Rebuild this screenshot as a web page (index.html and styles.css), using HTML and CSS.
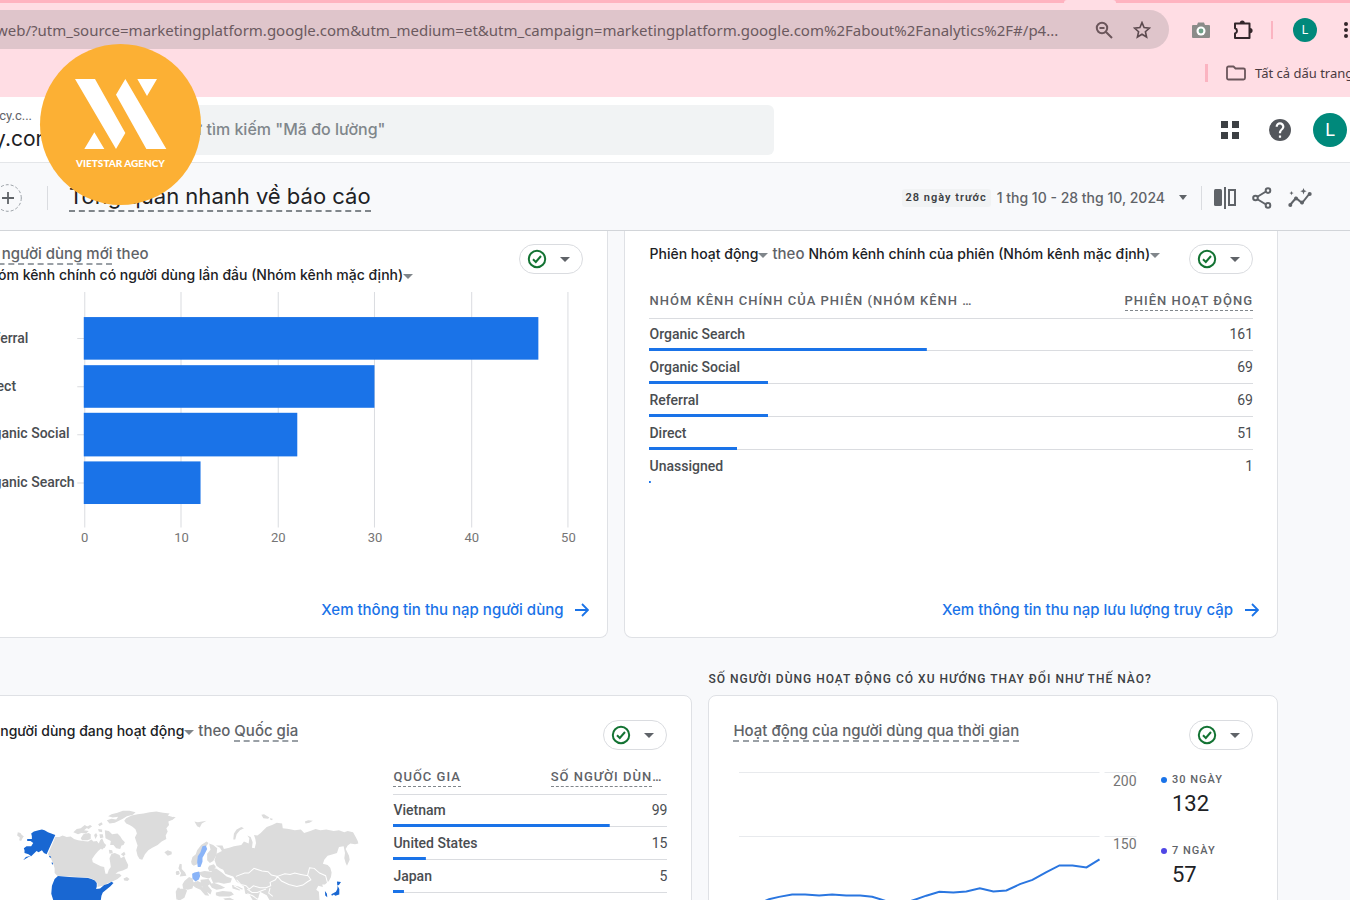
FILE: index.html
```html
<!DOCTYPE html>
<html lang="vi">
<head>
<meta charset="utf-8">
<title>Tổng quan nhanh về báo cáo</title>
<link rel="stylesheet" href="styles.css">
</head>
<body>
<div class="window">
  <div class="tabstrip"><span class="tab-active"></span></div>
  <div class="toolbar">
    <div class="omnibox">
      <input class="url" type="text" aria-label="URL" readonly value="web/?utm_source=marketingplatform.google.com&amp;utm_medium=et&amp;utm_campaign=marketingplatform.google.com%2Fabout%2Fanalytics%2F#/p4...">
      <button class="icon-btn" aria-label="Thu phóng"><svg width="18" height="18" viewBox="0 0 18 18" fill="none" stroke="#6b565b" stroke-width="2"><circle cx="7" cy="7" r="5.2"/><path d="M4.500 7h5M11 11l6 6"/></svg></button>
      <button class="icon-btn" aria-label="Dấu trang"><svg width="18" height="18" viewBox="0 0 18 18" fill="none" stroke="#5c4a4f" stroke-width="1.600"><path d="M9 1.600l2.100 5 5.400.5-4.100 3.600 1.200 5.300L9 13.200 4.400 16l1.200-5.300L1.500 7.100l5.400-.5z"/></svg></button>
    </div>
    <div class="extensions">
      <button class="icon-btn" aria-label="Chụp ảnh"><svg width="18" height="18" viewBox="0 0 18 18"><path d="M1 4h4l1-2.500h6L13 4h4a1 1 0 0 1 1 1v11a1 1 0 0 1-1 1H1a1 1 0 0 1-1-1V5a1 1 0 0 1 1-1z" fill="#8b8b89"/><circle cx="9" cy="10" r="4.500" fill="#fff"/><circle cx="9" cy="10" r="2.400" fill="#6fa088"/></svg></button>
      <button class="icon-btn" aria-label="Tiện ích"><svg width="20" height="20" viewBox="0 0 20 20"><path d="M2 3.500h14.500V18H2v-4.500a2.700 2.700 0 0 0 0-5.200z" fill="none" stroke="#33262a" stroke-width="2" stroke-linejoin="round"/><path d="M6.800 3a2.500 2.500 0 0 1 5 0zM17 8a2.600 2.600 0 0 1 0 5.200z" fill="#33262a"/></svg></button>
      <span class="bar-line"></span>
      <button class="avatar avatar-small" aria-label="Hồ sơ">L</button>
      <button class="icon-btn" aria-label="Trình đơn"><svg width="6" height="18" viewBox="0 0 6 18" fill="#33262a"><circle cx="3" cy="3" r="2"/><circle cx="3" cy="9" r="2"/><circle cx="3" cy="15" r="2"/></svg></button>
    </div>
  </div>
  <div class="bookmarks">
    <span class="bar-line bar-strong"></span>
    <button class="bookmark"><svg width="20" height="16" viewBox="0 0 20 16" fill="none" stroke="#6b565b" stroke-width="1.800" stroke-linejoin="round"><path d="M1 3a1.500 1.500 0 0 1 1.500-1.500H7.500l2 2h8A1.500 1.500 0 0 1 19 5v8a1.500 1.500 0 0 1-1.500 1.500h-15A1.500 1.500 0 0 1 1 13z"/></svg>Tất cả dấu trang</button>
  </div>

  <header class="app-bar">
    <div class="property"><span class="account">vietstaragency.c...</span><span class="site">vietstaragency.com</span></div>
    <input class="search" type="search" aria-label="Tìm kiếm" placeholder="Thử tìm kiếm &quot;Mã đo lường&quot;">
    <div class="app-actions">
      <button class="icon-btn" aria-label="Sản phẩm"><svg width="20" height="20" viewBox="0 0 20 20" fill="#3c4043"><path d="M1 1h7v7H1zM12 1h7v7h-7zM1 12h7v7H1zM12 12h7v7h-7z"/></svg></button>
      <button class="icon-btn" aria-label="Trợ giúp"><svg width="22" height="22" viewBox="2 2 20 20"><path fill="#54575c" d="M12 2a10 10 0 1 0 0 20 10 10 0 0 0 0-20zm1 17h-2v-2h2zm2.070-7.750l-.9.920C13.450 12.900 13 13.500 13 15h-2v-.5c0-1.100.450-2.100 1.170-2.830l1.240-1.260A2 2 0 1 0 10 9H8a4 4 0 1 1 8 0c0 .880-.360 1.680-.930 2.250z"/></svg></button>
      <button class="avatar" aria-label="Tài khoản">L</button>
    </div>
  </header>

  <div class="report-bar">
    <button class="add" aria-label="Thêm so sánh"><svg width="28" height="28" viewBox="0 0 28 28" fill="none"><circle cx="14" cy="14" r="13.300" stroke="#9aa0a6" stroke-dasharray="3 2"/><path d="M14 8v12M8 14h12" stroke="#5f6368" stroke-width="1.800"/></svg></button>
    <h1 class="report-title"><span>Tổng quan nhanh về báo cáo</span></h1>
    <div class="report-tools">
      <span class="chip">28 ngày trước</span>
      <button class="range">1 thg 10 - 28 thg 10, 2024<span class="caret"></span></button>
      <span class="tool-line"></span>
      <button class="icon-btn" aria-label="So sánh"><svg width="22" height="22" viewBox="0 0 22 22"><rect x="0" y="2" width="8" height="17" rx="1.500" fill="#5f6368"/><path d="M11 0v22" stroke="#5f6368" stroke-width="2"/><rect x="15" y="3" width="6" height="15" fill="none" stroke="#5f6368" stroke-width="2"/></svg></button>
      <button class="icon-btn" aria-label="Chia sẻ"><svg width="20" height="22" viewBox="0 0 20 22" fill="none" stroke="#5f6368" stroke-width="2"><path d="M5 10l9-5.500M5 12l9 5.500"/><circle cx="3.500" cy="11" r="2.300"/><circle cx="16" cy="3.600" r="2.300"/><circle cx="16" cy="18.400" r="2.300"/></svg></button>
      <button class="icon-btn" aria-label="Thông tin chi tiết"><svg width="24" height="20" viewBox="0 0 24 20"><path d="M2 17l6-7 6 5 8-10" fill="none" stroke="#5f6368" stroke-width="2"/><g fill="#5f6368"><circle cx="2.300" cy="17" r="2"/><circle cx="8" cy="10.500" r="2"/><circle cx="14" cy="14.500" r="2"/><circle cx="21.700" cy="6" r="2"/><path d="M15.500 0l.9 2.300 2.300.9-2.300.9-.9 2.300-.9-2.300-2.300-.9 2.300-.9zM3.500 3l.6 1.500 1.500.6-1.500.6-.6 1.500-.6-1.500-1.500-.6 1.500-.6z"/></g></svg></button>
    </div>
  </div>

  <main class="reports">
    <div class="row row-top">
      <section class="card card-top">
        <div class="card-head">
          <h2 class="card-title"><span class="line"><span class="dashed">Số người dùng mới</span> theo</span><span class="line strong">Nhóm kênh chính có người dùng lần đầu (Nhóm kênh mặc định)<span class="caret caret-tight"></span></span></h2>
          <button class="status" aria-label="Chất lượng dữ liệu"><svg width="20" height="20" viewBox="0 0 20 20" fill="none" stroke="#137333" stroke-width="2"><circle cx="10" cy="10" r="8.200"/><path d="M6 10.300l2.800 2.700L14 7"/></svg><span class="caret"></span></button>
        </div>
        <svg class="bar-chart" viewBox="-20 290 603 260">
          <path d="M85.500 292v235M181.500 292v235M278.500 292v235M374.500 292v235M471.500 292v235M567.500 292v235" stroke="#dadce0"/>
          <path d="M78 338.500h7M78 386.500h7M78 434.500h7M78 482.500h7" stroke="#dadce0"/>
          <g fill="#1a73e8"><rect x="84.500" y="317" width="453.500" height="42.500"/><rect x="84.500" y="365" width="290" height="42.500"/><rect x="84.500" y="412.500" width="213" height="43.500"/><rect x="84.500" y="461" width="116.500" height="42.500"/></g>
          <g class="bar-names"><text x="-20" y="343">Referral</text><text x="-20" y="391">Direct</text><text x="-20" y="438">Organic Social</text><text x="-20" y="487">Organic Search</text></g>
          <g class="axis"><text x="85.500" y="541">0</text><text x="182" y="541">10</text><text x="278.500" y="541">20</text><text x="375" y="541">30</text><text x="471.500" y="541">40</text><text x="568" y="541">50</text></g>
        </svg>
        <a class="more" href="#acquisition">Xem thông tin thu nạp người dùng<svg width="14" height="14" viewBox="0 0 14 14" fill="none" stroke="#1a73e8" stroke-width="1.800"><path d="M0 7h12.500M7 1l6 6-6 6"/></svg></a>
      </section>

      <section class="card card-top">
        <div class="card-head">
          <h2 class="card-title"><span class="line"><span class="strong">Phiên hoạt động<span class="caret caret-tight"></span></span> theo <span class="strong">Nhóm kênh chính của phiên (Nhóm kênh mặc định)<span class="caret caret-tight"></span></span></span></h2>
          <button class="status" aria-label="Chất lượng dữ liệu"><svg width="20" height="20" viewBox="0 0 20 20" fill="none" stroke="#137333" stroke-width="2"><circle cx="10" cy="10" r="8.200"/><path d="M6 10.300l2.800 2.700L14 7"/></svg><span class="caret"></span></button>
        </div>
        <table class="data">
          <thead><tr><th>NHÓM KÊNH CHÍNH CỦA PHIÊN (NHÓM KÊNH …</th><th class="num"><span class="dashed-thin">PHIÊN HOẠT ĐỘNG</span></th></tr></thead>
          <tbody>
            <tr style="--share:46%"><td>Organic Search</td><td class="num">161</td></tr>
            <tr style="--share:19.700%"><td>Organic Social</td><td class="num">69</td></tr>
            <tr style="--share:19.700%"><td>Referral</td><td class="num">69</td></tr>
            <tr style="--share:14.600%"><td>Direct</td><td class="num">51</td></tr>
            <tr style="--share:0.300%"><td>Unassigned</td><td class="num">1</td></tr>
          </tbody>
        </table>
        <a class="more" href="#traffic">Xem thông tin thu nạp lưu lượng truy cập<svg width="14" height="14" viewBox="0 0 14 14" fill="none" stroke="#1a73e8" stroke-width="1.800"><path d="M0 7h12.500M7 1l6 6-6 6"/></svg></a>
      </section>
    </div>

    <div class="row row-bottom">
      <h3 class="section-title">SỐ NGƯỜI DÙNG HOẠT ĐỘNG CÓ XU HƯỚNG THAY ĐỔI NHƯ THẾ NÀO?</h3>
      <section class="card card-low">
        <div class="card-head">
          <h2 class="card-title"><span class="line"><span class="strong">Số người dùng đang hoạt động<span class="caret caret-tight"></span></span> theo <span class="dashed">Quốc gia</span></span></h2>
          <button class="status" aria-label="Chất lượng dữ liệu"><svg width="20" height="20" viewBox="0 0 20 20" fill="none" stroke="#137333" stroke-width="2"><circle cx="10" cy="10" r="8.200"/><path d="M6 10.300l2.800 2.700L14 7"/></svg><span class="caret"></span></button>
        </div>
        <div class="geo">
          <svg class="map" viewBox="-60 231 1161 480">
            <g transform="translate(30 345)">
              <g fill="#dcdcdc">
                <path d="M138 98L150 98 160 94 172 98 184 97 194 104 206 108 222 110 236 112 246 106 252 112 262 110 268 118 272 108 278 102 284 116 290 122 286 130 276 132 266 140 256 152 248 164 250 174 262 180 274 186 284 188 286 198 288 208 294 208 298 196 304 188 302 174 300 162 306 148 316 146 330 152 334 162 344 156 350 170 356 182 354 192 340 198 326 202 318 208 330 208 336 214 324 224 312 230 296 236 280 244 264 248 264 236 254 226 240 220 144 214 136 206 136 192 132 178 124 160 116 150z"/>
                <path d="M350 42L366 34 384 30 402 28 420 24 440 22 460 26 480 28 474 34 494 40 490 46 476 52 478 62 470 72 474 82 468 94 470 104 456 112 444 122 428 130 416 138 406 150 398 166 390 164 384 154 380 138 384 124 380 112 376 100 382 88 378 76 370 68 360 62 350 58 344 50z"/>
                <path d="M292 48L306 44 320 46 326 38 310 40 296 36 306 30 324 26 340 20 360 20 378 24 370 32 352 36 340 44 328 50 316 56 300 58zM266 60l10-6 4 6-10 6zM192 84l10-10 12-2 12-10 10 6-12 10 14 2-8 8-14-2-10 4zM214 102l8-12 16-4 6 4 0 14-10 4-16 0zM228 70l14-8 6 4-10 8zM254 92l6-6 4 8-6 10zM266 74l12 2 0 8-10-2zM270 90l10 0 2 10-10 2zM286 78l12 2 10 10 16-2 8 8 6 10 8 8-4 8-6 2-4 10-12-2-8-10-10 0 2-12-16-8zM268 126l10-6 8 8-8 8zM298 136l10 2 2 8-10 2zM334 150l10-8 4 8-6 6zM342 222l10-4 8 6-6 6-10-2zM26 84l8 2 4 6 6 4-4 6-4 8-6-2 2-8-8-6zM464 144l10-6 12 4 0 8-12 4zM498 204l8 0 2 6-8 2zM498 262l6-12 6 0 0 35h-10z"/>
              </g>
              <path fill="#1967d2" d="M68 96L66 88 74 82 88 78 98 76 106 78 116 84 138 92 112 150 104 146 98 138 88 144 82 140 66 156 58 150 46 146 46 138 44 132 52 126 66 126 72 116 64 110 54 110 54 104 68 104zM66 154l-8 4-16 10 8-10zM119 154l5 2 2 5-5-2zM128 173l3 4 0 5-4-5zM146 215L180 218 236 221 246 224 256 228 262 236 262 246 260 254 272 252 284 242 296 238 306 232 312 236 302 246 290 256 280 264 276 274 272 300H136L126 268 128 244 136 224z"/>
            </g>
            <g transform="translate(510 345)">
              <g fill="#dcdcdc">
                <path d="M140 148L156 140 150 130 138 124 158 124 162 134 178 130 192 126 214 122 222 112 236 118 238 102 232 94 242 98 248 114 246 130 254 132 258 116 256 104 252 92 262 94 272 86 280 78 290 68 306 62 320 56 336 58 338 72 356 74 374 78 392 76 402 86 420 80 436 74 450 78 468 76 490 80 506 78 522 84 532 80 548 84 556 98 562 110 564 118 554 120 540 118 532 124 526 134 536 154 538 166 530 184 526 176 522 162 524 146 520 126 506 128 500 146 488 150 472 154 462 166 458 178 472 182 480 190 484 204 482 218 476 230 464 240 456 240 458 248 444 244 438 256 446 262 448 290 300 290 290 272 270 262 262 290 250 290 238 270 226 268 222 246 200 232 190 216 166 208 160 196 150 192 140 184 134 168z"/>
                <path d="M190 106l2-18 8-12 14-8 8 4-12 6-10 12-4 16zM74 52l10 2 26-4-14 8-6 12-8-4zM274 32l8-2 16 10-4 4-14-2zM300 42l8 2-2 4-6-2zM404 52l10-4 14 2-10 6-12 2zM0 44l12-6 6 2-14 8zM64 172l4-14 10-8 4-12 12-16 16-10 6 4-8 12-14 16-8 18-4 18-10 4-6-4zM112 168l0-20 10-12-4-18 12 4 12 10-2 20-10 18-10 6zM118 184l14-4 6 8-8 12-12 0-4-8zM84 204l20-4 20 2 4 14-12 6-18-4zM30 178l6 2 0 14 10 10 4 10-20 2 4-10-8-14zM20 200l8 0 2 8-8 4-4-6zM44 230l14-12 10 4 4 14-4 16-14 4-14-4-2-12zM22 254l22-2 8 6-8 22-18 10-6-14zM70 234l14-4 12 6 0 10 14 14 8 14-12-2-14-16-14-6-8-6zM92 226l24-2 8 12-10 8 12 14-4 12-16-12-12-16zM124 202l14-10 18 12 14 12 16 6-4 12-20 4-16-4-16 2-6-14zM118 238l16-2 16 6 16 8-12 4-14 2-14-6zM138 264l20-4 26 2 8 8-14 6-30 0-10-4zM186 242l20 4 14 8-12 4-20-6zM160 282l20-2 20 10h-30z"/>
              </g>
              <path fill="none" stroke="#fff" stroke-width="3" d="M198 216L224 206 236 206 252 192 276 200 294 202 304 212 322 216 316 226 300 234 302 244 288 250 270 250 250 244 238 254 228 244 212 240 200 226M322 216L344 208 360 210 374 206 392 210 412 214 418 190 432 192 448 206 466 214 472 236M322 216L334 230 356 240 380 246 398 242 412 232 422 226 414 214M300 250l-4 16 12 10M232 254l14 10 16 0 14-6 12-4M232 268l16 6 14 10 20-8M192 244l22 12 12 14"/>
              <path fill="#1967d2" d="M500 231l12 2-6 9-5 1zM502 244l5 10 0 16-12 4-4-4-6 4-2-5 14-7 4-8zM464 260l6 8 1 10-6-5z"/>
              <path fill="#8ab4f8" d="M98 126l10-2 4 10-8 16-6 10 0 12-6 16-8 0-2-14 2-18 8-12zM74 204l14-3 3 14-4 10-10 6-9-9-1-14z"/>
            </g>
          </svg>
          <table class="data data-geo">
            <thead><tr><th><span class="dashed-thin">QUỐC GIA</span></th><th class="num cut"><span class="dashed-thin">SỐ NGƯỜI DÙN</span>…</th></tr></thead>
            <tbody>
              <tr style="--share:79%"><td>Vietnam</td><td class="num">99</td></tr>
              <tr style="--share:12%"><td>United States</td><td class="num">15</td></tr>
              <tr style="--share:4%"><td>Japan</td><td class="num">5</td></tr>
            </tbody>
          </table>
        </div>
      </section>

      <section class="card card-low">
        <div class="card-head">
          <h2 class="card-title"><span class="line"><span class="dashed">Hoạt động của người dùng qua thời gian</span></span></h2>
          <button class="status" aria-label="Chất lượng dữ liệu"><svg width="20" height="20" viewBox="0 0 20 20" fill="none" stroke="#137333" stroke-width="2"><circle cx="10" cy="10" r="8.200"/><path d="M6 10.300l2.800 2.700L14 7"/></svg><span class="caret"></span></button>
        </div>
        <div class="trend">
          <svg class="line-chart" viewBox="733 767 403 160">
            <path d="M739 773.500h360M1104 773.500h32M739 837.500h360M1104 837.500h32" stroke="#e8eaed"/>
            <path d="M760 904l9-4 10-2.300 13-2.400h13l14 1 13-1 14 1h14l12 1.200 8 2.500 18 6 18-6 10-3.500 13-4 14 .8 13-1 13.500-3.300 13.500 3.300 13-1 13.500-6.300 12.500-4.300 13.500-7.400 13.500-7h13l14 2 13-8" fill="none" stroke="#2a76e0" stroke-width="2"/>
            <g class="scale"><text x="1136" y="787">200</text><text x="1136" y="850">150</text></g>
          </svg>
          <dl class="legend">
            <dt class="d30">30 NGÀY</dt><dd>132</dd>
            <dt class="d7">7 NGÀY</dt><dd>57</dd>
          </dl>
        </div>
      </section>
    </div>
  </main>

  <div class="brand">
    <svg width="92" height="70" viewBox="223 238 276 210" fill="#fff"><path d="M223 238h60l91 162-28 48zM374 238l123 210h-60L346 285zM410 238h59l-30 51zM281 398l30 50h-60z"/></svg>
    <span class="brand-name">VIETSTAR AGENCY</span>
  </div>
</div>
</body>
</html>
```
FILE: styles.css
```css
* { box-sizing: border-box; }
body { margin: 0; height: 100vh; overflow: hidden; background: #f8f9fb; font-family: Roboto, sans-serif; color: #3c4043; }
button { border: 0; padding: 0; background: none; font: inherit; color: inherit; cursor: pointer; white-space: nowrap; }
svg { display: block; flex: none; }
.icon-btn { display: flex; flex: none; }

.window { position: relative; display: flex; flex-direction: column; height: 100vh; margin-left: -46px; }

.tabstrip { height: 3px; background: #ffb3c0; padding-right: 234px; display: flex; justify-content: flex-end; }
.tab-active { width: 52px; background: #ffdde4; border-radius: 6px 6px 0 0; }
.toolbar { display: flex; align-items: center; padding-top: 7px; background: #ffdde4; }
.omnibox { flex: 1; display: flex; align-items: center; gap: 20px; height: 39px; padding: 0 18px 0 42px; background: #dfc5cb; border-radius: 20px; }
.url { flex: 1; min-width: 0; padding: 0; border: 0; outline: 0; background: none; font: 15px/24px "Noto Sans", sans-serif; color: #6b5a5f; }
.extensions { display: flex; align-items: center; gap: 18px; width: 181px; padding-left: 23px; }
.extensions .icon-btn:nth-child(2) { margin-left: 5px; }
.bar-line { flex: none; width: 2px; height: 18px; background: #fbb4c1; }
.avatar { flex: none; width: 34px; height: 34px; border-radius: 50%; background: #00897b; color: #fff; font: 18px/34px Roboto, sans-serif; text-align: center; }
.avatar-small { width: 24px; height: 24px; font-size: 12px; line-height: 24px; }
.extensions .avatar { margin: 0 8px 0 2px; }
.bookmarks { display: flex; justify-content: flex-end; align-items: center; gap: 18px; height: 48px; background: #ffdde4; }
.bar-strong { width: 3px; }
.bookmark { display: flex; align-items: center; gap: 9px; width: 124px; font: 13px/20px "Noto Sans", sans-serif; color: #4a3a3f; }

.app-bar { display: flex; align-items: center; height: 66px; background: #fff; border-bottom: 1px solid #e4e6e9; }
.property { display: flex; flex-direction: column; align-items: flex-end; width: 100px; padding-bottom: 2px; white-space: nowrap; }
.account { padding-right: 22px; font-size: 13px; line-height: 20px; color: #5f6368; }
.site { font: 21px/26px Inter, sans-serif; color: #202124; }
.search { width: 614px; height: 50px; margin-left: 106px; padding: 0 12px 2px; border: 0; border-radius: 6px; background: #f1f3f4; font: 500 16px/24px Inter, sans-serif; }
.search::placeholder { color: #80868b; opacity: 1; }
.app-actions { display: flex; align-items: center; gap: 29px; margin-left: auto; padding-right: 3px; }
.app-actions .avatar { margin-left: -7px; }

.report-bar { display: flex; align-items: center; height: 68px; padding-top: 2px; background: #f8f9fb; border-bottom: 1px solid #d2d5d9; }
.add { margin-left: 40px; }
.report-title { margin: 0 0 0 25px; padding: 12px 0 12px 22px; font: 22px/26px Inter, sans-serif; color: #202124; white-space: nowrap; background: linear-gradient(#dadce0, #dadce0) left center / 1px 24px no-repeat; }
.report-title span { display: block; padding-bottom: 1px; border-bottom: 2px dashed #80868b; }
.report-tools { display: flex; align-items: center; margin-left: auto; padding-right: 38px; gap: 16px; }
.report-tools .tool-line { margin: 0 -4px 0 -2px; }
.chip { padding: 0 4px; background: #f1f3f4; border-radius: 3px; font-size: 11px; line-height: 18px; font-weight: 600; letter-spacing: 1px; }
.range { display: flex; align-items: center; gap: 14px; margin-left: -10px; font: 500 14px/20px Inter, sans-serif; color: #5f6368; }
.tool-line { width: 1px; height: 24px; background: #dadce0; }
.caret { display: inline-block; flex: none; border: 4px solid transparent; border-top: 5px solid #5f6368; border-bottom: 0; vertical-align: middle; }
.caret-tight { border-width: 5px 5px 0; border-top-color: #80868b; }

.reports { flex: 1; min-height: 0; overflow: hidden; padding-right: 72px; }
.row { display: grid; column-gap: 16px; }
.row-top { grid-template-columns: 655fr 654fr; }
.row-bottom { grid-template-columns: 739fr 570fr; }
.card { display: flex; flex-direction: column; min-width: 0; background: #fff; border: 1px solid #dfe1e5; border-radius: 8px; }
.card-top { height: 407px; padding: 12px 24px 16px; border-top: 0; border-radius: 0 0 8px 8px; }
.card-low { height: 408px; padding: 24px 24px 0; }
.card-head { display: flex; justify-content: space-between; align-items: flex-start; height: 47px; }
.card-low .card-head { height: 46px; }
.card-title { margin: 0; font: 500 15px/21px Inter, sans-serif; color: #5f6368; white-space: nowrap; }
.line { display: block; }
.strong { font-size: 14px; color: #202124; }
.dashed { border-bottom: 2px dashed #9aa0a6; }
.dashed-thin { padding-bottom: 2px; border-bottom: 1px dashed #80868b; }
.status { display: flex; align-items: center; gap: 13px; height: 30px; padding: 0 12px 0 7px; border: 1px solid #dadce0; border-radius: 15px; }
.card-top .status { margin-top: 1px; }
.status .caret { border-width: 5px 5px 0; }

.bar-chart { width: 100%; }
.bar-names { font-size: 14px; font-weight: 500; fill: #4a4d51; }
.axis { font-size: 13px; fill: #757575; text-anchor: middle; }
.more { display: flex; align-items: center; gap: 12px; margin: auto -6px 0 auto; font: 500 15px/22px Inter, sans-serif; color: #1a73e8; text-decoration: none; }

.data { width: 100%; border-collapse: collapse; font-size: 14px; color: #4a4d51; }
.data th { height: 28px; padding: 0 0 6px; border-bottom: 1px solid #dadce0; font-size: 13px; font-weight: 500; line-height: 20px; letter-spacing: 1px; text-align: left; color: #5f6368; white-space: nowrap; }
.data tbody tr { height: 33px; background: linear-gradient(#1a73e8, #1a73e8) left bottom / var(--share) 3px no-repeat, linear-gradient(#dadce0, #dadce0) left bottom / 100% 1px no-repeat; }
.row-top .data tbody tr:last-child { background: linear-gradient(#1a73e8, #1a73e8) left bottom / var(--share) 2px no-repeat; }
.data td { padding: 0 0 1px; font-weight: 500; line-height: 20px; }
.data .num { text-align: right; }
.data td.num { font-weight: 400; }
.data .cut { padding-right: 5px; }

.geo { display: grid; grid-template-columns: 1fr 274px; gap: 26px; align-items: start; }
.map { width: 100%; }
.trend { display: flex; gap: 24px; }
.line-chart { flex: 1; min-width: 0; align-self: flex-start; }
.scale { font-size: 14px; fill: #757575; text-anchor: end; }
.legend { width: 92px; margin: 0; padding-top: 5px; }
.legend dt { display: flex; align-items: center; gap: 5px; font-size: 11px; line-height: 18px; letter-spacing: 1px; font-weight: 500; color: #5f6368; white-space: nowrap; }
.legend dt::before { content: ""; width: 6px; height: 6px; border-radius: 50%; background: #1a73e8; }
.legend .d7::before { background: #4f46e5; }
.legend dd { margin: 0 0 24px; padding-left: 11px; font: 22px/29px Roboto, sans-serif; color: #202124; }
.section-title { grid-column: 2; margin: 0; padding: 31px 0 6px; font-size: 12px; line-height: 20px; font-weight: 500; letter-spacing: 1px; white-space: nowrap; }
.row-bottom .card:nth-of-type(1) { grid-column: 1; }

.brand { position: absolute; top: 44px; left: 86px; width: 161px; height: 161px; padding-top: 35px; border-radius: 50%; background: #fcb034; color: #fff; display: flex; flex-direction: column; align-items: center; gap: 7px; }
.brand-name { font: 900 10px/14px Lato, sans-serif; white-space: nowrap; }
```
